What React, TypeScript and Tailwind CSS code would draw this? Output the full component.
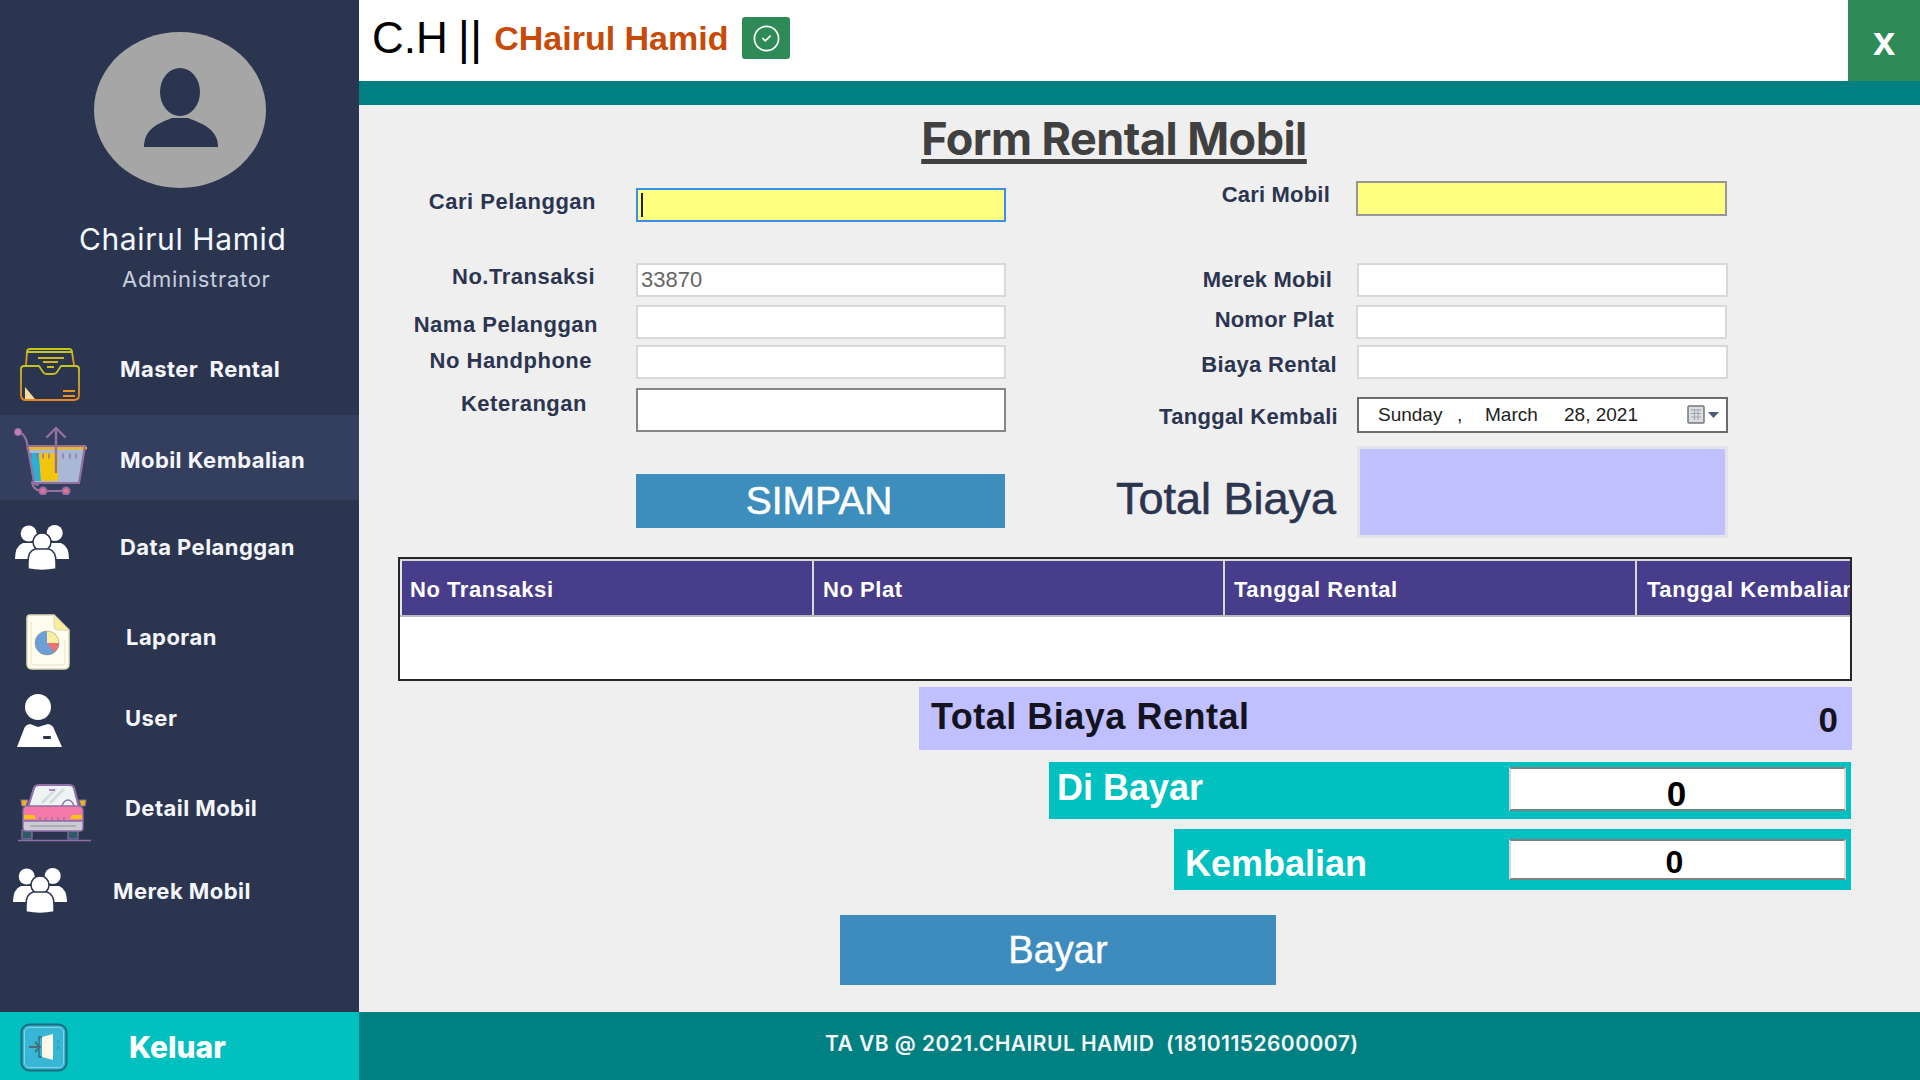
import React from "react";
import { CircleCheck } from "lucide-react";

const sansBold = "font-['Liberation_Sans',Arial,sans-serif] font-bold";
const side = "font-['Inter',sans-serif] font-bold text-[22px] tracking-[0.45px] text-[#f4f6fb]";

function Avatar() {
  return (
    <svg width="172" height="156" viewBox="0 0 172 156" className="ml-[94px]">
      <ellipse cx="86" cy="78" rx="86" ry="78" fill="#a6a6a6" />
      <ellipse cx="86" cy="60" rx="20" ry="24" fill="#2c3550" />
      <path d="M50 115 C50 98 62 92 78 86 L94 86 C110 92 124 98 124 115 Z" fill="#2c3550" />
    </svg>
  );
}

function TrayIcon() {
  return (
    <svg width="60" height="54" viewBox="0 0 60 54" fill="none" strokeWidth="1.8" strokeLinejoin="round">
      <defs>
        <linearGradient id="tray" x1="0" y1="0" x2="0" y2="1">
          <stop offset="0" stopColor="#c4c61e" />
          <stop offset="1" stopColor="#e8861e" />
        </linearGradient>
      </defs>
      <path d="M6 18 L7 5 Q7 2 10 2 L49 2 Q52 2 52 5 L54 18" stroke="url(#tray)" />
      <path d="M7 5 L52 5" stroke="#c4c61e" />
      <path d="M1 22 Q1 19 4 19 L19 19 L23 25 Q24 27 27 27 L33 27 Q36 27 37 25 L41 19 L56 19 Q59 19 59 22 L59 48 Q59 53 54 53 L6 53 Q1 53 1 48 Z" stroke="url(#tray)" />
      <path d="M18 11 H44 M23 15 H38 M27 20 H34" stroke="#d0b820" />
      <path d="M5 40 L15 52 L5 52 Z" fill="#f7dca0" />
      <path d="M43 44 H55 M43 49 H55" stroke="#e8961e" strokeWidth="2" />
    </svg>
  );
}

function CartIcon() {
  return (
    <svg width="74" height="72" viewBox="0 0 74 72" fill="none" strokeLinejoin="round" strokeLinecap="round">
      <path d="M15 26 H71 L66 59 H21 Z" fill="#a9b8d6" />
      <path d="M16 30 H26 L28 58 H20 Z" fill="#2bb0d2" />
      <path d="M26 30 H45 V58 H28 Z" fill="#f2c50f" />
      <path d="M15 25 H73" stroke="#f0b818" strokeWidth="3" />
      <path d="M7 10 Q12 11 14 20 L21 59 Q22 62 25 62 M19 59 Q20 67 28 68 H50 M15 23 H72 L66 60 H21" stroke="#94709f" strokeWidth="2.2" />
      <path d="M43 49 V5 M34 14 L43 5 L52 14" stroke="#94709f" strokeWidth="2.4" />
      <path d="M18 31 V35 M24 31 V35 M30 31 V35 M36 31 V35 M50 31 V35 M57 31 V35 M63 31 V35" stroke="#94709f" strokeWidth="1.4" />
      <circle cx="5" cy="9" r="3.5" fill="#c67fae" stroke="#94709f" />
      <circle cx="30" cy="68" r="3.5" fill="#ea6d9d" stroke="#94709f" strokeWidth="2" />
      <circle cx="53" cy="68" r="3.5" fill="#ea6d9d" stroke="#94709f" strokeWidth="2" />
    </svg>
  );
}

function GroupIcon() {
  return (
    <svg width="54" height="46" viewBox="0 0 54 46" fill="#ffffff">
      <circle cx="13.7" cy="8.5" r="8" />
      <circle cx="39.7" cy="8" r="8" />
      <path d="M0 34 Q0 21 8 18 L20 18 Q28 21 28 34 Z" />
      <path d="M26 34 Q26 21 34 18 L46 18 Q54 21 54 34 Z" />
      <circle cx="27" cy="17" r="9" stroke="#2c3550" strokeWidth="1.5" />
      <path d="M13 44 L13 37 Q13 26 20 24 L34 24 Q41 26 41 37 L41 44 Q27 47 13 44 Z" stroke="#2c3550" strokeWidth="1.5" />
    </svg>
  );
}

function ReportIcon() {
  return (
    <svg width="44" height="56" viewBox="0 0 44 56" fill="none">
      <path d="M4 1 H28 L43 16 V50 Q43 55 38 55 H6 Q1 55 1 50 V4 Q1 1 4 1 Z" fill="#fffdf0" stroke="#dcd8b4" strokeWidth="1.6" />
      <path d="M28 1 L43 16 H32 Q28 16 28 12 Z" fill="#f8ee9c" stroke="#dcd8b4" />
      <path d="M5 8 V47 Q5 51 9 51 H36 Q39 51 39 47 V26" stroke="#e4e0c4" strokeWidth="1" />
      <path d="M21 17 A12 12 0 1 0 33 29 L21 29 Z" fill="#6c9fd8" />
      <path d="M21 17 A12 12 0 0 1 33 29 L21 29 Z" fill="#f9efa0" />
      <path d="M21 29 L33 29 A12 12 0 0 1 28 38 Z" fill="#ef6f72" />
      <circle cx="21" cy="29" r="12" stroke="#8a8a70" strokeWidth="0.5" />
    </svg>
  );
}

function UserIcon() {
  return (
    <svg width="46" height="54" viewBox="0 0 46 54">
      <circle cx="21" cy="13" r="13" fill="#ffffff" />
      <path d="M0 53 L7 35 Q8 31 13 30 L21 33 L31 30 Q36 31 37 35 L45 53 Z" fill="#ffffff" />
      <rect x="26" y="42" width="8" height="3" rx="1" fill="#2c3550" />
    </svg>
  );
}

function CarIcon() {
  return (
    <svg width="73" height="59" viewBox="0 0 73 59" strokeLinejoin="round">
      <path d="M4 47 H14 V56 H4 Z M50 47 H60 V56 H50 Z" fill="#2f5a68" stroke="#8e6fa8" strokeWidth="1.2" />
      <path d="M10 24 L16 5 Q17 2 21 2 L51 2 Q55 2 56 5 L61 24 Z" fill="#eef3f3" stroke="#8e6fa8" strokeWidth="2.2" />
      <path d="M24 20 L38 6 M32 20 L46 6" stroke="#d4dee0" strokeWidth="3" />
      <path d="M44 23 Q46 17 50 17 Q54 17 56 23" fill="none" stroke="#8e6fa8" strokeWidth="1.5" />
      <path d="M31 7 H37" stroke="#8e6fa8" strokeWidth="1.5" />
      <path d="M3 17 H10 L8 23 H4 Z M68 17 H61 L63 23 H67 Z" fill="#eeb814" stroke="#8e6fa8" strokeWidth="1.2" />
      <path d="M5 28 Q5 23 10 23 H60 Q65 23 65 28 V38 H5 Z" fill="#f478a8" stroke="#8e6fa8" strokeWidth="1.4" />
      <path d="M6 32 H16 L18 36 H6 Z M64 32 H54 L52 36 H64 Z" fill="#f5c40f" />
      <path d="M5 38 H65 V45 Q65 48 62 48 H8 Q5 48 5 45 Z" fill="#cbcbd2" stroke="#8e6fa8" strokeWidth="1.4" />
      <path d="M12 43 H58" stroke="#8e8ea0" strokeWidth="1" />
      <path d="M22 34 V37 M28 34 V37 M34 34 V37 M40 34 V37 M46 34 V37" stroke="#8e6fa8" strokeWidth="1.2" />
      <path d="M0 57.5 H73" stroke="#8e6fa8" strokeWidth="1.4" />
    </svg>
  );
}

function ExitIcon() {
  return (
    <svg width="48" height="49" viewBox="0 0 48 49" fill="none">
      <rect x="1.5" y="1.5" width="45" height="46" rx="8" fill="#38b6d6" stroke="#1d6a7a" strokeWidth="2" />
      <rect x="4.5" y="4.5" width="39" height="40" rx="5" stroke="#7fd6e6" strokeWidth="1" />
      <path d="M22 14 L33 11 V37 L22 34 Z" fill="#fff8e8" />
      <path d="M22 14 H19 V34 H22" stroke="#2e6f7e" strokeWidth="1.4" />
      <path d="M9 24 H20 M15 19 L20 24 L15 29" stroke="#4a6f78" strokeWidth="2" />
      <path d="M38 17 V20 M38 23 V26" stroke="#2e8ba0" strokeWidth="1" />
    </svg>
  );
}

function Sidebar() {
  return (
    <aside className="flex h-full w-[359px] shrink-0 flex-col bg-[#2c3550]">
      <div className="h-[335px] pt-[32px]">
        <Avatar />
        <div className="mt-[32px] pl-[79px] font-['Inter',sans-serif] text-[30px] leading-[38px] tracking-[0.6px] text-[#f4f8ff]">Chairul Hamid</div>
        <div className="mt-[7px] pl-[122px] font-['Inter',sans-serif] text-[22px] leading-[28px] tracking-[0.7px] text-[#c6cede]">Administrator</div>
      </div>
      <div className="flex h-[80px] items-center">
        <div className="ml-[20px] mt-[-3px] w-[60px]"><TrayIcon /></div>
        <div className={`${side} ml-[40px] mb-[12px] whitespace-pre`}>Master  Rental</div>
      </div>
      <div className="flex h-[85px] items-center bg-[#343f60]">
        <div className="ml-[13px] mt-[2px] w-[74px]"><CartIcon /></div>
        <div className={`${side} ml-[33px] mt-[5px]`}>Mobil Kembalian</div>
      </div>
      <div className="flex h-[95px] items-center">
        <div className="ml-[15px] w-[54px]"><GroupIcon /></div>
        <div className={`${side} ml-[51px]`}>Data Pelanggan</div>
      </div>
      <div className="flex h-[85px] items-center">
        <div className="ml-[26px] mt-[9px] w-[45px]"><ReportIcon /></div>
        <div className={`${side} ml-[55px]`}>Laporan</div>
      </div>
      <div className="flex h-[76px] items-center">
        <div className="ml-[17px] mt-[5px] w-[46px]"><UserIcon /></div>
        <div className={`${side} ml-[62px]`}>User</div>
      </div>
      <div className="flex h-[104px] items-center">
        <div className="ml-[18px] mt-[9px] w-[73px]"><CarIcon /></div>
        <div className={`${side} ml-[34px]`}>Detail Mobil</div>
      </div>
      <div className="flex h-[62px] items-center">
        <div className="ml-[13px] w-[54px]"><GroupIcon /></div>
        <div className={`${side} ml-[46px]`}>Merek Mobil</div>
      </div>
      <div className="flex-1" />
      <div className="flex h-[68px] items-center bg-[#00c0c0]">
        <div className="ml-[20px] mt-[2px] w-[48px]"><ExitIcon /></div>
        <div className="ml-[61px] mt-[2px] font-['Inter',sans-serif] text-[30px] font-extrabold text-white">Keluar</div>
      </div>
    </aside>
  );
}

function Label({ className, children }: { className: string; children: React.ReactNode }) {
  return (
    <div className={`${sansBold} shrink-0 whitespace-nowrap text-right text-[22px] leading-[26px] text-[#2c3550] ${className}`}>
      {children}
    </div>
  );
}

const plainInput = "h-full border-2 border-[#d8d8d8] bg-white";

function LeftColumn() {
  return (
    <div className="mt-[12px] w-[647px] shrink-0">
      <div className="flex h-[34px] items-center">
        <Label className="mb-[6px] w-[277px] pr-[40px] tracking-[0.5px]">Cari Pelanggan</Label>
        <div className="flex h-full w-[370px] items-center border-2 border-[#3a8fe8] bg-[#ffff80] pl-[3px]">
          <div className="h-[24px] w-[2px] bg-[#20204a]" />
        </div>
      </div>
      <div className="mt-[41px] flex h-[34px] items-center">
        <Label className="mb-[6px] w-[277px] pr-[41px] tracking-[0.5px]">No.Transaksi</Label>
        <div className={`${plainInput} flex w-[370px] items-center pb-[2px] pl-[3px] font-['Liberation_Sans',Arial,sans-serif] text-[22px] text-[#666666]`}>33870</div>
      </div>
      <div className="mt-[8px] flex h-[34px] items-center">
        <Label className="mt-[6px] w-[277px] pr-[38px] tracking-[0.5px]">Nama Pelanggan</Label>
        <div className={`${plainInput} w-[370px]`} />
      </div>
      <div className="mt-[6px] flex h-[34px] items-center">
        <Label className="mb-[2px] w-[277px] pr-[44px] tracking-[0.5px]">No Handphone</Label>
        <div className={`${plainInput} w-[370px]`} />
      </div>
      <div className="mt-[9px] flex h-[44px] items-center">
        <Label className="mb-[12px] w-[277px] pr-[49px] tracking-[0.5px]">Keterangan</Label>
        <div className="h-full w-[370px] border-2 border-[#858585] bg-white" />
      </div>
      <div className="ml-[277px] mt-[42px] flex h-[54px] w-[369px] items-center justify-center bg-[#3d8dbd] pr-[3px] font-['Liberation_Sans',Arial,sans-serif] text-[39px] text-white [-webkit-text-stroke:0.5px_#ffffff]">
        SIMPAN
      </div>
    </div>
  );
}

function CalendarGlyph() {
  return (
    <svg width="32" height="20" viewBox="0 0 32 20">
      <rect x="1" y="1" width="16" height="17" rx="1" fill="#d9dce2" stroke="#777777" strokeWidth="1.5" />
      <path d="M4 5 H14 M4 8.500 H14 M4 12 H14 M7.500 4 V15 M11 4 V15" stroke="#9ea4b0" strokeWidth="1" />
      <path d="M21 7 H32 L26.500 13 Z" fill="#4a5a78" />
    </svg>
  );
}

function RightColumn() {
  return (
    <div className="mt-[5px] flex-1">
      <div className="flex h-[35px] items-center">
        <Label className="mb-[7px] w-[350px] pr-[26px] tracking-[0.2px]">Cari Mobil</Label>
        <div className="h-full w-[371px] border-2 border-[#969696] bg-[#ffff80]" />
      </div>
      <div className="mt-[47px] flex h-[34px] items-center">
        <Label className="w-[351px] pr-[25px] tracking-[0.2px]">Merek Mobil</Label>
        <div className={`${plainInput} w-[371px]`} />
      </div>
      <div className="mt-[8px] flex h-[34px] items-center">
        <Label className="mb-[4px] w-[350px] pr-[22px] tracking-[0.2px]">Nomor Plat</Label>
        <div className={`${plainInput} w-[371px]`} />
      </div>
      <div className="mt-[6px] flex h-[34px] items-center">
        <Label className="mt-[6px] w-[351px] pr-[20px] tracking-[0.3px]">Biaya Rental</Label>
        <div className={`${plainInput} w-[371px]`} />
      </div>
      <div className="mt-[18px] flex h-[36px] items-center">
        <Label className="mt-[4px] w-[351px] pr-[19px] tracking-[0.3px]">Tanggal Kembali</Label>
        <div className="flex h-full w-[371px] items-center border-2 border-[#6c6c6c] bg-white font-['Liberation_Sans',Arial,sans-serif] text-[19px] text-[#222222]">
          <span className="ml-[19px] w-[79px]">Sunday</span>
          <span className="w-[28px]">,</span>
          <span className="w-[79px]">March</span>
          <span className="w-[123px]">28, 2021</span>
          <CalendarGlyph />
        </div>
      </div>
      <div className="mt-[13px] flex h-[92px] items-center">
        <div className="mt-[14px] w-[351px] shrink-0 whitespace-nowrap pr-[21px] text-right font-['Liberation_Sans',Arial,sans-serif] text-[45px] leading-[48px] text-[#2c3550] [-webkit-text-stroke:0.6px_#2c3550]">
          Total Biaya
        </div>
        <div className="h-full w-[371px] border-[3px] border-[#e3e3ea] bg-[#c0bfff]" />
      </div>
    </div>
  );
}

function HeaderCell({ className, children }: { className: string; children: React.ReactNode }) {
  return (
    <div className={`${sansBold} flex shrink-0 items-center whitespace-nowrap pt-[2px] text-[22px] tracking-[0.55px] text-white ${className}`}>
      {children}
    </div>
  );
}

function Table() {
  return (
    <div className="ml-[39px] mt-[19px] h-[124px] w-[1454px] overflow-hidden border-2 border-[#262626] bg-white">
      <div className="h-[58px] border-b-2 border-t-2 border-b-[#b8b8c0] border-t-[#d8d8d8] bg-[#e6e6e6] pl-[2px]">
        <div className="flex h-full bg-[#483d8b]">
          <HeaderCell className="w-[412px] border-r-2 border-r-[#d8d8d8] pl-[8px]">No Transaksi</HeaderCell>
          <HeaderCell className="w-[411px] border-r-2 border-r-[#d8d8d8] pl-[9px]">No Plat</HeaderCell>
          <HeaderCell className="w-[412px] border-r-2 border-r-[#d8d8d8] pl-[9px]">Tanggal Rental</HeaderCell>
          <HeaderCell className="w-[300px] pl-[10px]">Tanggal Kembalian</HeaderCell>
        </div>
      </div>
    </div>
  );
}

function Totals() {
  return (
    <>
      <div className={`${sansBold} ml-[560px] mt-[6px] flex h-[63px] w-[933px] items-center justify-between bg-[#c0bfff] pl-[12px] pr-[14px] text-[#14141f]`}>
        <span className="mb-[4px] text-[36px] tracking-[0.5px]">Total Biaya Rental</span>
        <span className="mt-[4px] text-[35px]">0</span>
      </div>
      <div className={`${sansBold} ml-[690px] mt-[12px] flex h-[57px] w-[802px] items-center justify-between bg-[#00c0c0] pl-[8px] pr-[5px] text-white`}>
        <span className="mb-[6px] text-[36px]">Di Bayar</span>
        <div className="mt-[-4px] flex h-[44px] w-[337px] items-center justify-center border-2 border-[#d8d8d8] border-b-[#808080] border-t-[#808080] bg-white pr-[2px] pt-[12px] text-[35px] text-black">0</div>
      </div>
      <div className={`${sansBold} ml-[815px] mt-[10px] flex h-[61px] w-[677px] items-center justify-between bg-[#00c0c0] pl-[11px] pr-[5px] text-white`}>
        <span className="mt-[8px] text-[36px]">Kembalian</span>
        <div className="flex h-[41px] w-[337px] items-center justify-center border-2 border-[#d8d8d8] border-b-[#808080] border-t-[#808080] bg-white pr-[6px] pt-[5px] text-[32px] text-black">0</div>
      </div>
      <div className="ml-[481px] mt-[25px] flex h-[70px] w-[436px] items-center justify-center bg-[#3e8cbe] font-['Liberation_Sans',Arial,sans-serif] text-[38px] text-white [-webkit-text-stroke:0.4px_#ffffff]">
        Bayar
      </div>
    </>
  );
}

export default function App() {
  return (
    <div className="flex h-[1080px] w-[1920px] overflow-hidden">
      <Sidebar />
      <main className="flex h-full min-w-0 flex-1 flex-col bg-[#efefef]">
        <header className="flex h-[81px] shrink-0 bg-white">
          <div className="flex flex-1 items-center pb-[5px]">
            <span className="ml-[13px] font-['Liberation_Sans',Arial,sans-serif] text-[44px] leading-none text-black">C.H</span>
            <span className="ml-[10px] mt-[-2px] font-['Liberation_Sans',Arial,sans-serif] text-[47px] leading-none text-black">||</span>
            <span className={`${sansBold} ml-[12px] text-[34px] leading-none text-[#c84a08]`}>CHairul Hamid</span>
            <div className="ml-[14px] flex h-[42px] w-[48px] items-center justify-center rounded-[3px] bg-[#2e8b57] text-white">
              <CircleCheck size={29} strokeWidth={1.4} />
            </div>
          </div>
          <div className={`${sansBold} flex h-full w-[72px] items-center justify-center bg-[#2e8b57] text-[40px] text-white`}>x</div>
        </header>
        <div className="h-[24px] shrink-0 bg-[#008080]" />
        <div className="flex-1">
          <div className="ml-[562px] flex h-[71px] w-[386px] items-center justify-center whitespace-nowrap pb-[4px] font-['Inter',sans-serif] text-[45px] font-bold tracking-[-0.55px] text-[#404040] underline decoration-[5px] underline-offset-[4px]">
            Form Rental Mobil
          </div>
          <div className="flex">
            <LeftColumn />
            <RightColumn />
          </div>
          <Table />
          <Totals />
        </div>
        <footer className="flex h-[68px] shrink-0 items-center bg-[#008080] pl-[466px]">
          <span className="mb-[4px] whitespace-pre font-['Inter',sans-serif] text-[21px] font-semibold tracking-[0.45px] text-[#f4f6fb]">TA VB @ 2021.CHAIRUL HAMID  (18101152600007)</span>
        </footer>
      </main>
    </div>
  );
}
